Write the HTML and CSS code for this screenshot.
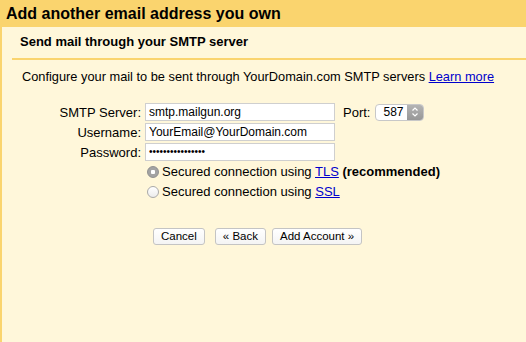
FILE: index.html
```html
<!DOCTYPE html>
<html lang="en">
  <head>
    <meta charset="UTF-8" />
    <title>Add another email address you own</title>
    <link rel="stylesheet" href="styles.css">
  </head>
  <body>
    <div class="dialog">
      <h1 class="title">Add another email address you own</h1>
      <div class="content">
        <h2 class="subhead">Send mail through your SMTP server</h2>
        <p class="intro">
          Configure your mail to be sent through YourDomain.com SMTP servers
          <a href="#">Learn more</a>
        </p>

        <div class="smtp_form">
          <label class="lbl">SMTP Server:</label>
          <div class="field">smtp.mailgun.org</div>
          <label class="lbl port_lbl">Port:</label>
          <div class="select">
            <span class="select_val">587</span>
            <span class="select_arrow">
              <svg width="8" height="12" viewBox="0 0 8 12">
                <path d="M1.5 4.5 L4 2 L6.5 4.5 M1.5 7.5 L4 10 L6.5 7.5" fill="none" stroke="#fff" stroke-width="1.2"/>
              </svg>
            </span>
          </div>

          <label class="lbl">Username:</label>
          <div class="field">YourEmail@YourDomain.com</div>

          <label class="lbl">Password:</label>
          <div class="field dots">&bull;&bull;&bull;&bull;&bull;&bull;&bull;&bull;&bull;&bull;&bull;&bull;&bull;&bull;&bull;&bull;</div>

          <div class="radio_row">
            <span class="radio checked"></span>Secured connection using <a href="#">TLS</a> <b>(recommended)</b>
          </div>
          <div class="radio_row">
            <span class="radio"></span>Secured connection using <a href="#">SSL</a>
          </div>
        </div>

        <div class="buttons">
          <button class="cancel">Cancel</button>
          <button class="back">&laquo; Back</button>
          <button>Add Account &raquo;</button>
        </div>
      </div>
    </div>
  </body>
</html>
```

FILE: styles.css
```css
body {
  margin: 0;
  padding: 0;
  background-color: #fff7da;
  font-family: "Liberation Sans", Arial, sans-serif;
  font-size: 13px;
  color: #000;
}

.dialog {
  min-height: 342px;
  border-left: 2px solid #fad46e;
  box-sizing: border-box;
}

a {
  color: #0000cc;
  text-decoration: underline;
}

.title {
  margin: 0 0 0 -2px;
  height: 27px;
  line-height: 27px;
  padding-left: 6px;
  background-color: #fad46e;
  font-size: 16px;
  font-weight: bold;
}

.content {
  padding-left: 10px;
}

.subhead {
  margin: 0;
  padding: 7px 0 8px 8px;
  line-height: 16px;
  font-size: 13px;
  font-weight: bold;
  border-bottom: 2px solid #fad46e;
}

.intro {
  margin: 9px 0 0 10px;
  line-height: 16px;
  font-size: 12.8px;
}

.smtp_form {
  display: grid;
  grid-template-columns: 129px 190px max-content max-content 1fr;
  grid-auto-rows: 18px;
  row-gap: 2px;
  column-gap: 4px;
  margin-top: 18px;
  align-items: center;
}

.lbl {
  grid-column: 1;
  text-align: right;
}

.field {
  grid-column: 2;
  height: 18px;
  box-sizing: border-box;
  border: 1px solid #cfcfcf;
  background: #fff;
  padding: 0 3px;
  line-height: 16px;
  font-size: 12px;
  overflow: hidden;
  white-space: nowrap;
}

.lbl.port_lbl {
  grid-column: 3;
  grid-row: 1;
  margin-left: 4px;
}

.dots {
  font-size: 10px;
  letter-spacing: 0;
}

.select {
  grid-column: 4;
  grid-row: 1;
  display: flex;
  width: 49px;
  height: 17px;
  margin-left: 1px;
  box-sizing: border-box;
  border: 1px solid #c8c8c8;
  border-radius: 4px;
  background: #fff;
  overflow: hidden;
  font-size: 12px;
}

.select_val {
  flex: 1;
  line-height: 15px;
  padding-left: 7px;
}

.select_arrow {
  width: 16px;
  display: flex;
  align-items: center;
  justify-content: center;
  background: linear-gradient(#b4b4b4, #979797);
}

.radio_row {
  grid-column: 2 / 6;
  white-space: nowrap;
  line-height: 18px;
}

.radio {
  display: inline-block;
  vertical-align: -2px;
  width: 12px;
  height: 12px;
  box-sizing: border-box;
  margin: 0 3px 0 2px;
  border-radius: 50%;
  border: 1px solid #a9a9a9;
  background: linear-gradient(#ffffff, #ececec);
}

.radio.checked {
  border-color: #8f8f8f;
  background: radial-gradient(circle, #ffffff 0 2px, #a3a3a3 2.5px);
}

.buttons {
  margin: 27px 0 0 141px;
  display: flex;
}

button {
  height: 17px;
  padding: 0 7px;
  border: 1px solid #c4c4c4;
  border-radius: 3px;
  background: linear-gradient(#ffffff, #f4f4f4);
  font-family: "Liberation Sans", Arial, sans-serif;
  font-size: 11.5px;
  line-height: 15px;
  color: #000;
  margin-right: 6px;
}

.cancel {
  margin-right: 10px;
}
```
